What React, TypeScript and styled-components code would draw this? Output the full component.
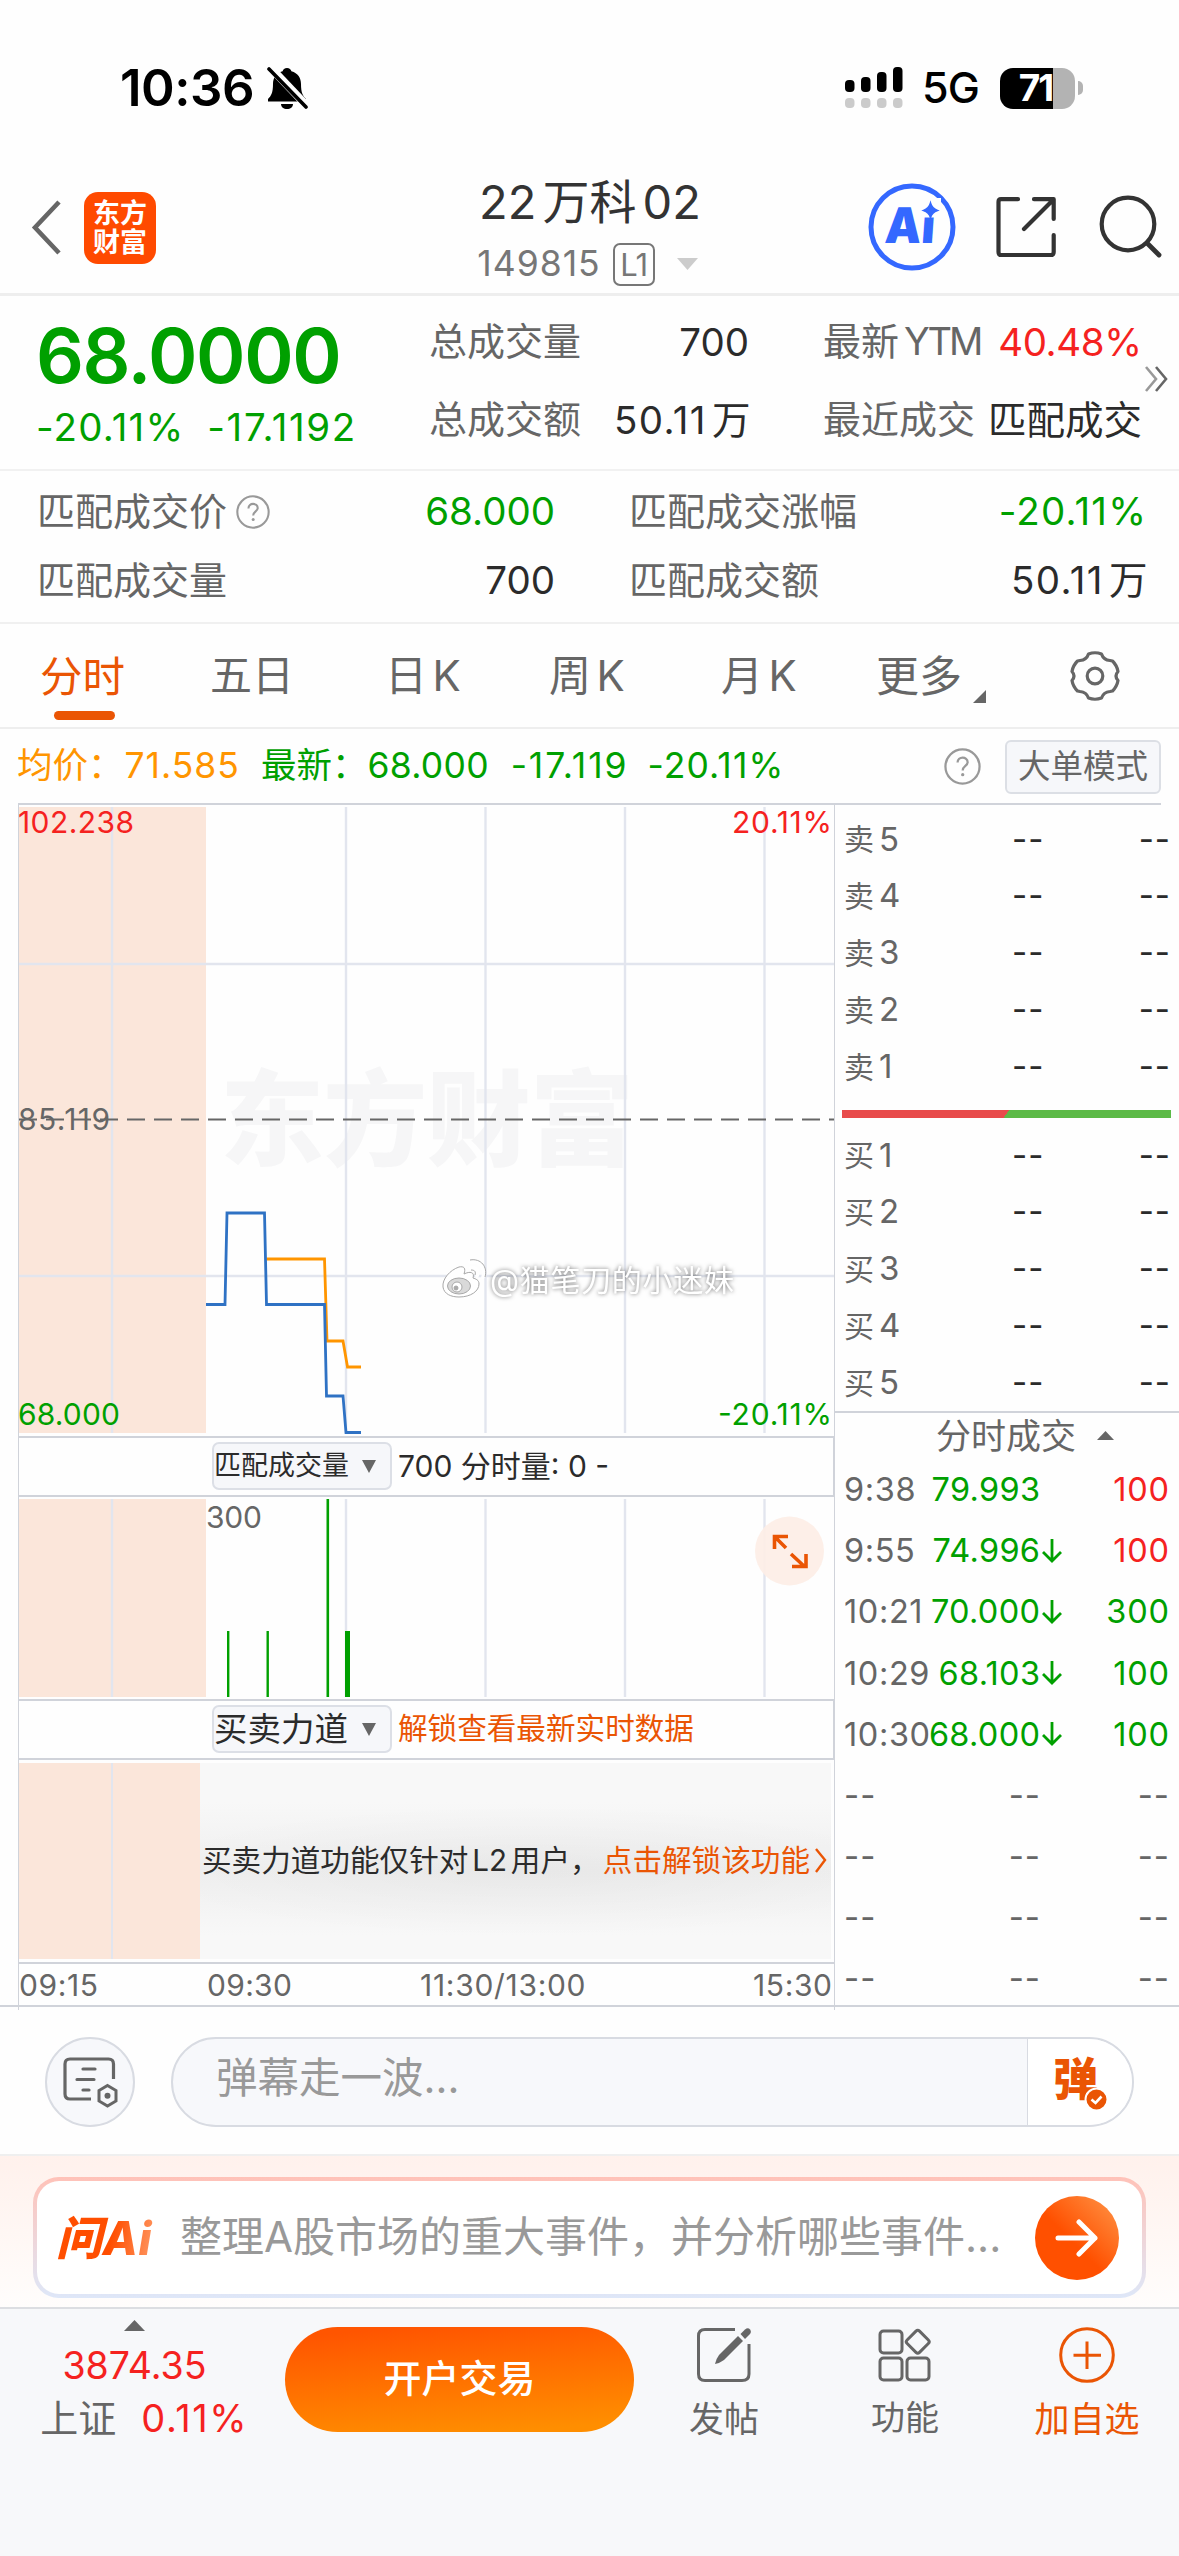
import React from 'react';
import styled, { createGlobalStyle } from 'styled-components';

const GREEN = '#00a000';
const RED = '#f5221f';
const ORANGE = '#ea5504';
const GREY = '#666666';
const INK = '#2b2b2b';
const LINE = '#d0d3da';
const GRID = '#e2e5ee';
const PEACH = '#fbe6da';
const FONT = "Inter, 'Noto Sans CJK SC', sans-serif";

const Global = createGlobalStyle`
  * { box-sizing: border-box; }
  body { margin: 0; background: #fefefe; }
`;

const Screen = styled.div`
  width: 1179px;
  height: 2556px;
  display: flex;
  flex-direction: column;
  background: #fefefe;
  font-family: ${FONT};
  overflow: hidden;
`;

const Txt = styled.span<{ $s: number; $c?: string; $ls?: number; $w?: number }>`
  font-size: ${(p) => p.$s}px;
  line-height: 1.2;
  color: ${(p) => p.$c ?? GREY};
  letter-spacing: ${(p) => p.$ls ?? 0}px;
  margin-right: ${(p) => -(p.$ls ?? 0)}px;
  font-weight: ${(p) => p.$w ?? 400};
  white-space: pre;
  flex: none;
`;

const Han = styled.span<{ $before: boolean; $after: boolean }>`
  margin-left: ${(p) => (p.$before ? 0.13 : 0)}em;
  margin-right: ${(p) => (p.$after ? 0.13 : 0)}em;
  letter-spacing: 0;
`;

/* Adds a narrow gap where Chinese characters meet Latin letters or digits. */
const mix = (text: string) => {
  const runs = text.split(/([\u4e00-\u9fff]+)/).filter(Boolean);
  if (runs.length < 2) return text;
  return runs.map((run, i) =>
    /[\u4e00-\u9fff]/.test(run) ? (
      <Han key={i} $before={i > 0} $after={i < runs.length - 1}>{run}</Han>
    ) : (
      run
    ),
  );
};

const Spacer = styled.div<{ $w?: number }>`
  flex: ${(p) => (p.$w ? `0 0 ${p.$w}px` : '1')};
`;

/* ---------- status bar ---------- */
const StatusBar = styled.div`
  height: 176px;
  flex: none;
  display: flex;
  align-items: center;
  padding: 0 96px 0 120px;
`;

const Battery = styled.div`
  width: 75px;
  height: 41px;
  border-radius: 13px;
  background: linear-gradient(90deg, #000 0 53px, #b3b3b3 53px);
  display: flex;
  align-items: center;
  justify-content: center;
  margin-left: 20px;
  padding-right: 2px;
`;

const BatteryTip = styled.div`
  width: 5px;
  height: 14px;
  margin-left: 3px;
  border-radius: 0 5px 5px 0;
  background: #b3b3b3;
`;

/* ---------- navigation ---------- */
const Nav = styled.header`
  height: 120px;
  flex: none;
  display: grid;
  grid-template-columns: 390px 400px 389px;
  border-bottom: 3px solid #eeeeee;
`;

const NavLeft = styled.div`
  display: flex;
  align-items: center;
  padding: 0 0 16px 30px;
  gap: 22px;
`;

const AppLogo = styled.div`
  width: 72px;
  height: 72px;
  margin-top: 3px;
  border-radius: 14px;
  background: #ff4a00;
  display: grid;
  place-content: center;
  font: 700 27px/29px ${FONT};
  color: #fff;
  text-align: center;
`;

const NavTitle = styled.div`
  display: flex;
  flex-direction: column;
  align-items: center;
`;

const TitleRow = styled.div`
  height: 52px;
  display: flex;
  align-items: center;
`;

const CodeRow = styled.div`
  display: flex;
  align-items: center;
  height: 46px;
  margin: 13px 0 0 -5px;
`;

const LevelBadge = styled.span`
  width: 42px;
  height: 43px;
  margin: 0 22px 0 13px;
  border: 2px solid #777;
  border-radius: 7px;
  display: grid;
  place-items: center;
  font-size: 31px;
  line-height: 1;
  letter-spacing: -1px;
  color: #777;
`;

const NavRight = styled.div`
  display: flex;
  justify-content: flex-end;
  padding: 4px 0 0 0;
`;

/* ---------- quote ---------- */
const Quote = styled.section`
  height: 175px;
  flex: none;
  display: grid;
  grid-template-columns: 393px 319px 75px 1fr;
  padding: 7px 0 0 36px;
  border-bottom: 2px solid #f1f1f1;
`;

const PriceBlock = styled.div`
  display: flex;
  flex-direction: column;
`;

const BigPrice = styled.div`
  height: 106px;
  display: flex;
  align-items: center;
`;

const ChangeRow = styled.div`
  height: 36px;
  display: flex;
  align-items: center;
  gap: 24px;
`;

const FactColumn = styled.div<{ $row: number; $w: number }>`
  width: ${(p) => p.$w}px;
  display: grid;
  grid-auto-rows: ${(p) => p.$row}px;
`;

const FactRow = styled.div`
  display: flex;
  align-items: center;
  justify-content: space-between;
`;

const FactSide = styled.div`
  display: flex;
`;

const MoreMark = styled.svg`
  flex: none;
  margin: 62px 0 0 2px;
`;

const MatchBox = styled.section`
  height: 153px;
  flex: none;
  display: grid;
  grid-template-columns: 517px 516px;
  gap: 75px;
  padding: 6px 0 0 37px;
  border-bottom: 2px solid #f0f0f0;
`;

const LabelWithIcon = styled.div`
  display: flex;
  align-items: center;
  gap: 9px;
`;

/* ---------- tabs ---------- */
const Tabs = styled.nav`
  height: 105px;
  flex: none;
  display: flex;
  border-bottom: 2px solid #eeeeee;
  padding-left: 40px;
`;

const Tab = styled.div<{ $w: number }>`
  width: ${(p) => p.$w}px;
  height: 103px;
  display: flex;
  flex-direction: column;
  align-items: flex-start;
  padding-top: 27px;
`;

const TabMark = styled.div`
  width: 61px;
  height: 9px;
  margin: 9px 0 0 14px;
  border-radius: 5px;
  background: ${ORANGE};
`;

const TabRow = styled.div`
  display: flex;
  align-items: flex-end;
  gap: 11px;
`;

const InfoLine = styled.div`
  height: 74px;
  flex: none;
  display: flex;
  align-items: center;
  padding: 1px 18px 0 17px;
`;

const ModeButton = styled.button`
  width: 156px;
  height: 54px;
  margin-left: 24px;
  padding: 0;
  border: 2px solid #dcdfe5;
  border-radius: 6px;
  background: #f6f7fa;
  display: grid;
  place-items: center;
  font-family: ${FONT};
`;

/* ---------- chart and order book ---------- */
const Market = styled.main`
  height: 1204px;
  flex: none;
  display: grid;
  grid-template-columns: 817px 344px;
  padding-left: 18px;
  border-bottom: 2px solid ${LINE};
`;

const ChartSide = styled.div`
  display: flex;
  flex-direction: column;
  border-top: 2px solid ${LINE};
  border-left: 1px solid ${LINE};
  border-right: 1px solid ${LINE};
`;

const PriceChart = styled.div`
  height: 631px;
  flex: none;
`;

const Layer = styled.svg`
  display: block;
`;

const IndicatorBar = styled.div`
  height: 61px;
  flex: none;
  display: flex;
  align-items: center;
  padding: 0 0 1px 193px;
  border-top: 2px solid ${LINE};
  border-bottom: 2px solid ${LINE};
  border-right: 1px solid ${LINE};
`;

const Picker = styled.div`
  width: 180px;
  height: 48px;
  margin-right: 6px;
  border: 2px solid #dcdfe6;
  border-radius: 7px;
  background: #f6f7fa;
  display: flex;
  align-items: center;
  justify-content: space-between;
  padding-right: 14px;
`;

const VolumeChart = styled.div`
  height: 202px;
  flex: none;
`;

const PowerPane = styled.div`
  height: 204px;
  flex: none;
  display: grid;
  grid-template-columns: 181px 631px;
  padding: 3px 0;
  border-bottom: 2px solid ${LINE};
`;

const PreOpen = styled.div`
  background: linear-gradient(90deg, transparent 92px, ${GRID} 92px 94px, transparent 94px), ${PEACH};
`;

const LockPane = styled.div`
  display: flex;
  align-items: center;
  padding-left: 2px;
  background:
    radial-gradient(ellipse 62% 34% at 52% 55%, rgba(0, 0, 0, 0.03), transparent),
    linear-gradient(180deg, #f8f8f8 20%, #efefef 55%, #f8f8f8 88%);
`;

const TimeAxis = styled.div`
  flex: 1;
  display: grid;
  grid-template-columns: 188px 213px 1fr auto;
  align-items: center;
  padding: 0 2px 3px 0;
`;

const Book = styled.aside`
  display: flex;
  flex-direction: column;
`;

const BookHalf = styled.div<{ $h: number; $top: number }>`
  height: ${(p) => p.$h}px;
  padding-top: ${(p) => p.$top}px;
  display: grid;
  grid-auto-rows: 56.8px;
`;

const BookRow = styled.div`
  display: grid;
  grid-template-columns: 168px 30px 1fr;
  align-items: center;
  padding: 0 9px 0 9px;
  & > :last-child { justify-self: end; }
`;

const BookTop = styled.div`
  border-top: 2px solid ${LINE};
  width: 326px;
`;

const Level = styled.div`
  display: flex;
  align-items: center;
  gap: 5px;
`;

const RatioBar = styled.div`
  height: 8px;
  flex: none;
  margin: 0 8px 0 7px;
  background: linear-gradient(126deg, #e84b4b 49.9%, #5cba47 50%);
`;

const TradesHead = styled.div`
  height: 49px;
  flex: none;
  border-top: 2px solid ${LINE};
  display: flex;
  align-items: center;
  padding: 0 0 2px 101px;
  gap: 21px;
`;

const Trades = styled.div`
  display: grid;
  grid-auto-rows: 61.2px;
  margin-top: -1px;
`;

const TradeRow = styled.div`
  display: grid;
  grid-template-columns: 50px 146px 24px 1fr;
  align-items: center;
  padding: 0 10px 0 9px;
  & > :nth-child(2) { justify-self: end; }
  & > :last-child { justify-self: end; }
`;

/* ---------- comment bar ---------- */
const CommentBar = styled.section`
  height: 149px;
  flex: none;
  display: flex;
  align-items: flex-start;
  padding: 30px 0 0 45px;
  gap: 36px;
  border-bottom: 2px solid #efefef;
`;

const RoundButton = styled.div`
  width: 90px;
  height: 90px;
  border: 2px solid #d8dbe2;
  border-radius: 50%;
  background: #f7f8fb;
  display: grid;
  place-items: center;
`;

const CommentInput = styled.div`
  width: 963px;
  height: 90px;
  border: 2px solid #d8dbe2;
  border-radius: 45px;
  background: #f7f8fb;
  display: flex;
  overflow: hidden;
`;

const Placeholder = styled.div`
  width: 855px;
  padding: 15px 0 0 43px;
  display: flex;
  align-items: flex-start;
  border-right: 1px solid #d8dbe2;
`;

const BulletToggle = styled.div`
  position: relative;
  flex: 1;
  background: #fff;
  padding: 14px 0 0 25px;
`;

const BulletCheck = styled.svg`
  position: absolute;
  left: 56px;
  top: 48px;
`;

/* ---------- AI prompt ---------- */
const AiPanel = styled.section`
  height: 151px;
  flex: none;
  padding: 21px 33px 0;
  background: linear-gradient(180deg, #fff1ec, #fffdfc);
`;

const AiBox = styled.div`
  height: 121px;
  border: 4px solid transparent;
  border-radius: 26px;
  background:
    linear-gradient(#fff, #fff) padding-box,
    linear-gradient(180deg, #ffc2b8, #dee7f8) border-box;
  display: flex;
  align-items: center;
  padding: 0 23px 0 19px;
`;

const AiWord = styled.span`
  width: 124px;
  font: italic 800 46px/56px ${FONT};
  letter-spacing: 0.5px;
  color: transparent;
  background: linear-gradient(100deg, #ff4e00 45%, #ff9a66 80%);
  background-clip: text;
  -webkit-background-clip: text;
`;

const GoButton = styled.div`
  width: 84px;
  height: 84px;
  border-radius: 50%;
  background: linear-gradient(45deg, #ff5000 45%, #ff8a3c 90%);
  display: grid;
  place-items: center;
`;

/* ---------- footer ---------- */
const Footer = styled.footer`
  flex: 1;
  display: flex;
  align-items: flex-start;
  padding-top: 10px;
  border-top: 2px solid #dcdee2;
  background: #f7f8fa;
`;

const IndexBox = styled.div`
  width: 285px;
  display: flex;
  flex-direction: column;
  align-items: center;
  padding: 1px 16px 0 0;
`;

const IndexLine = styled.div<{ $h: number; $shift?: number }>`
  height: ${(p) => p.$h}px;
  padding-left: ${(p) => p.$shift ?? 0}px;
  display: flex;
  align-items: center;
  gap: 25px;
`;

const OpenButton = styled.div`
  width: 349px;
  height: 105px;
  margin-top: 8px;
  padding-bottom: 2px;
  border-radius: 53px;
  background: linear-gradient(175deg, #ff5500 8%, #ff8e00 92%);
  display: grid;
  place-items: center;
`;

const Action = styled.div<{ $w: number; $ml: number }>`
  width: ${(p) => p.$w}px;
  margin-left: ${(p) => p.$ml}px;
  display: flex;
  flex-direction: column;
  align-items: center;
  padding-top: 8px;
  gap: 15px;
`;

/* ---------- icons ---------- */
const Triangle = ({ w, h, color, down }: { w: number; h: number; color: string; down?: boolean }) => (
  <svg width={w} height={h} viewBox="0 0 10 10" preserveAspectRatio="none">
    <path d={down ? 'M0 0H10L5 10Z' : 'M0 10H10L5 0Z'} fill={color} />
  </svg>
);

const Help = ({ size }: { size: number }) => (
  <svg width={size} height={size} viewBox="0 0 36 36">
    <circle cx="18" cy="18" r="16.6" fill="none" stroke="#999" strokeWidth="2.2" />
    <path d="M13.2 14.2c0-6.4 9.8-6.2 9.8-.4 0 3.6-4.8 3.6-4.8 8" fill="none" stroke="#999" strokeWidth="2.2" />
    <circle cx="18.2" cy="26" r="1.6" fill="#999" />
  </svg>
);

const BellOff = () => (
  <svg width="42" height="44" viewBox="0 0 42 44">
    <path d="M21 2c2.400 0 4 1.500 4.400 3.200C32 7 35 12 35 18c0 9 2 12 5 15v2.500H2V33c3-3 5-6 5-15C7 12 10 7 16.600 5.200 17 3.500 18.600 2 21 2Z" fill="#000" />
    <path d="M15 38h12c0 3-2.600 5-6 5s-6-2-6-5Z" fill="#000" />
    <path d="M3 0L43 42" stroke="#fefefe" strokeWidth="8" />
    <path d="M3 3L40 41" stroke="#000" strokeWidth="3.600" strokeLinecap="round" />
  </svg>
);

const Signal = () => (
  <svg width="58" height="42" viewBox="0 0 58 42">
    {[0, 1, 2, 3].map((i) => (
      <g key={i}>
        <rect x={i * 16} y={[13, 10, 5, 0][i]} width="9.500" height={[12, 15, 20, 25][i]} rx="4" fill="#000" />
        <rect x={i * 16} y="31" width="9.500" height="10" rx="4" fill="#cbcbcb" />
      </g>
    ))}
  </svg>
);

const NavIcons = () => (
  <svg width="329" height="110" viewBox="0 0 329 110">
    <circle cx="62" cy="47" r="41" fill="none" stroke="#3468ff" strokeWidth="5" />
    <text x="37" y="63" fontFamily="Inter" fontWeight="900" fontSize="49" fill="#3468ff" transform="skewX(-4) translate(1.500 0)" textLength="50" lengthAdjust="spacingAndGlyphs">Ai</text>
    <path d="M71 18H91V37.500H71Z" fill="#fefefe" />
    <path d="M80.500 23Q82 28.500 87.500 30.500Q82 32.500 80.500 37.500Q79 32.500 73.500 30.500Q79 28.500 80.500 23Z" fill="#3468ff" stroke="#3468ff" strokeWidth="1.500" />
    <g fill="none" stroke="#333" strokeWidth="4.200" strokeLinecap="round" strokeLinejoin="round">
      <path d="M168 19.200H151Q148.500 19.200 148.500 22V72Q148.500 75 151 75H201Q203.700 75 203.700 72V55M184 19.200H203.700V39M203 20L174 49" />
      <circle cx="278" cy="44" r="26.300" />
      <path d="M298 64L309 75" strokeWidth="4.800" />
    </g>
  </svg>
);

const Gear = () => (
  <svg width="52" height="50" viewBox="0 0 52 50">
    <path
      d="M19.500 3Q26 0.500 32.500 3Q34.500 9 41 9.500L43.500 10Q48 14.500 49 20.500Q45 25 49 29.500Q48 35.500 43.500 40L41 40.500Q34.500 41 32.500 47Q26 49.500 19.500 47Q17.500 41 11 40.500L8.500 40Q4 35.500 3 29.500Q7 25 3 20.500Q4 14.500 8.500 10L11 9.500Q17.500 9 19.500 3Z"
      fill="none" stroke="#666" strokeWidth="3.200" strokeLinejoin="round"
    />
    <circle cx="26" cy="25" r="7.800" fill="none" stroke="#666" strokeWidth="3.200" />
  </svg>
);

const NoteIcon = () => (
  <svg width="56" height="52" viewBox="0 0 56 52" fill="none" stroke="#666" strokeWidth="3.200" strokeLinecap="round">
    <path d="M51.500 23V8Q51.500 3 46.500 3H8Q3 3 3 8V38Q3 43 8 43H29" strokeLinecap="butt" />
    <path d="M21 13H33M15 23.500H32M21 34H27" />
    <path d="M45.500 29.500L54 34.500V45L45.500 50L37 45V34.500Z" strokeWidth="3" />
    <circle cx="45.500" cy="39.800" r="3" fill="#666" stroke="none" />
  </svg>
);

const PostIcon = () => (
  <svg width="56" height="56" viewBox="0 0 56 56">
    <path d="M39 2.400H9Q2.500 2.400 2.500 9V47Q2.500 53.500 9 53.500H46Q53 53.500 53 47V17" fill="none" stroke="#666" strokeWidth="3" />
    <path d="M42 9L47 14L28 33Q24 36 19 37Q20 32 23 28Z" fill="#666" />
    <path d="M44.500 7L49 2.500Q52 0 54 2.500Q56 5 53.500 7.500L49 12Z" fill="#666" />
  </svg>
);

const FeatureIcon = () => (
  <svg width="54" height="56" viewBox="0 0 54 56" fill="none" stroke="#666" strokeWidth="3">
    <rect x="2" y="4" width="22" height="22" rx="3.500" />
    <rect x="2" y="31" width="22" height="22" rx="3.500" />
    <rect x="29" y="31" width="22" height="22" rx="3.500" />
    <rect x="31" y="6" width="17.500" height="17.500" rx="2.500" transform="rotate(45 39.750 14.750)" />
  </svg>
);

const AddIcon = () => (
  <svg width="56" height="56" viewBox="0 0 56 56" fill="none" stroke={ORANGE} strokeWidth="3">
    <circle cx="28" cy="28" r="26.300" />
    <path d="M28 14.500V42M14.500 28.300H42" />
  </svg>
);

const Weibo = () => (
  <g transform="translate(424 456)" stroke="#a8a8a8" strokeWidth="1">
    <path d="M16 6C7 9-1 18 0 26c1 7 8 10 16 10 12 0 20-6 20-13 0-4-3-5-6-6 2-6-3-7-9-4 2-6 0-8-5-7Z" fill="#fff" />
    <ellipse cx="16" cy="25" rx="11.500" ry="8" fill="#d9d9d9" />
    <circle cx="14" cy="26" r="5" fill="#fff" />
    <circle cx="13" cy="27" r="2" fill="#aaa" />
    <path d="M28 7c5-1 8 3 6 8M27 1c9-2 16 6 13 15" fill="none" stroke="#fff" strokeWidth="3.600" strokeLinecap="round" />
    <path d="M27-1c11-2 18 7 15 17M28 9c4 0 5 2 4 5" fill="none" />
  </g>
);

/* ---------- data ---------- */
const GRID_X = [93, 327, 466.5, 606, 745.5];

const tabs = [
  { label: '五日', w: 175, ls: 0 },
  { label: '日K', w: 164, ls: 0 },
  { label: '周K', w: 172, ls: 0 },
  { label: '月K', w: 155, ls: 0 },
];

const trades: [string, string, boolean, string, string][] = [
  ['9:38', '79.993', false, '100', RED],
  ['9:55', '74.996', true, '100', RED],
  ['10:21', '70.000', true, '300', GREEN],
  ['10:29', '68.103', true, '100', GREEN],
  ['10:30', '68.000', true, '100', GREEN],
];

const Fact = ({ label, value, color = INK, ls = 0, lls = 0 }: { label: string; value: string; color?: string; ls?: number; lls?: number }) => (
  <FactRow>
    <Txt $s={38} $ls={lls}>{mix(label)}</Txt>
    <Txt $s={38.5} $c={color} $ls={ls}>{mix(value)}</Txt>
  </FactRow>
);

const Dashes = ({ color = GREY }: { color?: string }) => <Txt $s={33} $c={color} $ls={1}>--</Txt>;

const Depth = ({ side, n }: { side: string; n: number }) => (
  <BookRow>
    <Level>
      <Txt $s={30}>{side}</Txt>
      <Txt $s={33}>{n}</Txt>
    </Level>
    <Dashes color={INK} />
    <Dashes color={INK} />
  </BookRow>
);

const label = (x: number, y: number, t: string, fill: string, w: number, end = false) => (
  <text x={end ? x - w : x} y={y} fill={fill} fontSize="30" fontFamily={FONT} textLength={w}>{t}</text>
);

export default function App() {
  return (
    <Screen>
      <Global />
      <StatusBar>
        <Txt $s={51} $c="#000" $w={600} $ls={-0.5}>10:36</Txt>
        <Spacer $w={11} />
        <BellOff />
        <Spacer />
        <Signal />
        <Spacer $w={19} />
        <Txt $s={43} $c="#000" $w={500} $ls={-0.8}>5G</Txt>
        <Battery><Txt $s={37} $c="#fff" $w={700} $ls={-2}>71</Txt></Battery>
        <BatteryTip />
      </StatusBar>

      <Nav>
        <NavLeft>
          <svg width="32" height="56" viewBox="0 0 32 56">
            <path d="M29 3L5 28.500L29 54" fill="none" stroke="#666" strokeWidth="4.600" />
          </svg>
          <AppLogo>东方<br />财富</AppLogo>
        </NavLeft>
        <NavTitle>
          <TitleRow><Txt $s={47} $c="#333">{mix('22万科02')}</Txt></TitleRow>
          <CodeRow>
            <Txt $s={35.5} $c="#777" $ls={1}>149815</Txt>
            <LevelBadge>L1</LevelBadge>
            <Triangle w={21} h={12} color="#ccc" down />
          </CodeRow>
        </NavTitle>
        <NavRight><NavIcons /></NavRight>
      </Nav>

      <Quote>
        <PriceBlock>
          <BigPrice><Txt $s={75} $c={GREEN} $w={600} $ls={-1.4}>68.0000</Txt></BigPrice>
          <ChangeRow>
            <Txt $s={38.5} $c={GREEN} $ls={1.2}>-20.11%</Txt>
            <Txt $s={38.5} $c={GREEN} $ls={1.6}>-17.1192</Txt>
          </ChangeRow>
        </PriceBlock>
        <FactColumn $row={78} $w={320}>
          <Fact label="总成交量" value="700" />
          <Fact label="总成交额" value="50.11万" ls={1.4} />
        </FactColumn>
        <div />
        <FactSide>
          <FactColumn $row={78} $w={319}>
            <Fact label="最新YTM" value="40.48%" color={RED} ls={-0.4} lls={-3} />
            <Fact label="最近成交" value="匹配成交" />
          </FactColumn>
          <MoreMark width="28" height="28" viewBox="0 0 28 28">
            <path d="M2 2L12 14L2 26" fill="none" stroke="#999" strokeWidth="2.600" />
            <path d="M12 2L22 14L12 26" fill="none" stroke="#666" strokeWidth="2.600" />
          </MoreMark>
        </FactSide>
      </Quote>

      <MatchBox>
        <FactColumn $row={69} $w={518}>
          <FactRow>
            <LabelWithIcon><Txt $s={38}>匹配成交价</Txt><Help size={34} /></LabelWithIcon>
            <Txt $s={38.5} $c={GREEN}>68.000</Txt>
          </FactRow>
          <Fact label="匹配成交量" value="700" />
        </FactColumn>
        <FactColumn $row={69} $w={517}>
          <Fact label="匹配成交涨幅" value="-20.11%" color={GREEN} ls={1.2} />
          <Fact label="匹配成交额" value="50.11万" ls={1.4} />
        </FactColumn>
      </MatchBox>

      <Tabs>
        <Tab $w={170}>
          <Txt $s={42.5} $c={ORANGE}>分时</Txt>
          <TabMark />
        </Tab>
        {tabs.map((t) => (
          <Tab key={t.label} $w={t.w}><Txt $s={42} $ls={t.ls}>{mix(t.label)}</Txt></Tab>
        ))}
        <Tab $w={193}>
          <TabRow>
            <Txt $s={43}>更多</Txt>
            <svg width="13" height="13" viewBox="0 0 13 13"><path d="M13 0V13H0Z" fill="#666" /></svg>
          </TabRow>
        </Tab>
        <Tab $w={60}><Gear /></Tab>
      </Tabs>

      <InfoLine>
        <Txt $s={35.5} $c="#ff9500">均价：</Txt>
        <Spacer $w={1} />
        <Txt $s={35.5} $c="#ff9500" $ls={1}>71.585</Txt>
        <Spacer $w={22} />
        <Txt $s={35.5} $c={GREEN}>最新：</Txt>
        <Txt $s={35.5} $c={GREEN} $ls={0.3}>68.000</Txt>
        <Spacer $w={22} />
        <Txt $s={35.5} $c={GREEN} $ls={1.9}>-17.119</Txt>
        <Spacer $w={21} />
        <Txt $s={35.5} $c={GREEN} $ls={1.1}>-20.11%</Txt>
        <Spacer />
        <Help size={37} />
        <ModeButton><Txt $s={32.5}>大单模式</Txt></ModeButton>
      </InfoLine>

      <Market>
        <ChartSide>
          <PriceChart>
            <Layer width="815" height="631" viewBox="0 0 815 631">
              <rect x="0" y="2" width="187" height="626" fill={PEACH} />
              <text x="201" y="353" fontFamily={FONT} fontWeight="900" fontSize="104" fill="#f6f6f7" textLength="414">东方财富</text>
              <g stroke={GRID} strokeWidth="2.400">
                {GRID_X.map((x) => <path key={x} d={`M${x} 2V628`} />)}
                <path d="M0 159H815M0 471H815" />
              </g>
              {label(-1, 28, '102.238', RED, 116)}
              {label(813, 28, '20.11%', RED, 100, true)}
              {label(-1, 325, '85.119', GREY, 92)}
              {label(-1, 620, '68.000', GREEN, 102)}
              {label(813, 620, '-20.11%', GREEN, 114, true)}
              <path d="M0 314.500H815" stroke="#666" strokeWidth="2" strokeDasharray="18 9" />
              <path d="M247.500 454H305.500L308 536H324L328.500 562H342" fill="none" stroke="#ff9500" strokeWidth="2.800" />
              <path d="M187 499.500H206L208 408H245.500L247.500 499.500H305.500L307.500 591H324L327 627.500H342" fill="none" stroke="#2f72c4" strokeWidth="2.800" />
              <Weibo />
              <text x="471" y="486" fontFamily={FONT} fontSize="30" fill="#fff" textLength="244" style={{ filter: 'drop-shadow(0 0 2px rgba(0,0,0,.55))' }}>@猫笔刀的小迷妹</text>
            </Layer>
          </PriceChart>
          <IndicatorBar>
            <Picker>
              <Txt $s={27} $c={INK}>匹配成交量</Txt>
              <Triangle w={14} h={13} color="#666" down />
            </Picker>
            <Txt $s={30} $c={INK}>700 分时量: 0 -</Txt>
          </IndicatorBar>
          <VolumeChart>
            <Layer width="815" height="202" viewBox="0 0 815 202">
              <rect x="0" y="2" width="187" height="198" fill={PEACH} />
              <g stroke={GRID} strokeWidth="2.400">
                {GRID_X.map((x) => <path key={x} d={`M${x} 2V200`} />)}
              </g>
              {label(187, 31, '300', GREY, 56)}
              <g fill={GREEN}>
                <rect x="208" y="134" width="2.400" height="66" />
                <rect x="247.500" y="134" width="2.400" height="66" />
                <rect x="307.500" y="2" width="2.600" height="198" />
                <rect x="326" y="134" width="5" height="66" />
              </g>
              <circle cx="770.500" cy="54" r="34.500" fill="#fdeee6" fillOpacity=".92" />
              <g fill="none" stroke={ORANGE} strokeWidth="3.600">
                <path d="M755.500 52V39.500H769M756 40L767 51M772 57L786 70M787 57V69.500H773" />
              </g>
            </Layer>
          </VolumeChart>
          <IndicatorBar>
            <Picker>
              <Txt $s={33.5} $c={INK}>买卖力道</Txt>
              <Triangle w={14} h={13} color="#666" down />
            </Picker>
            <Txt $s={29.6} $c={ORANGE}>解锁查看最新实时数据</Txt>
          </IndicatorBar>
          <PowerPane>
            <PreOpen />
            <LockPane>
              <Txt $s={29.6} $c={INK}>{mix('买卖力道功能仅针对L2用户')}，</Txt>
              <Spacer />
              <Txt $s={29.6} $c={ORANGE}>点击解锁该功能</Txt>
              <svg width="21" height="28" viewBox="0 0 21 28">
                <path d="M6 2L15 13L6 25" fill="none" stroke={ORANGE} strokeWidth="2.400" />
              </svg>
            </LockPane>
          </PowerPane>
          <TimeAxis>
            <Txt $s={30} $ls={0.6}>09:15</Txt>
            <Txt $s={30} $ls={0.3}>09:30</Txt>
            <Txt $s={30} $ls={0.7}>11:30/13:00</Txt>
            <Txt $s={30} $ls={0.6}>15:30</Txt>
          </TimeAxis>
        </ChartSide>

        <Book>
          <BookTop />
          <BookHalf $h={305} $top={6}>
            {[5, 4, 3, 2, 1].map((n) => <Depth key={n} side="卖" n={n} />)}
          </BookHalf>
          <RatioBar />
          <BookHalf $h={293} $top={9}>
            {[1, 2, 3, 4, 5].map((n) => <Depth key={n} side="买" n={n} />)}
          </BookHalf>
          <TradesHead>
            <Txt $s={35}>分时成交</Txt>
            <Triangle w={17} h={9} color="#666" />
          </TradesHead>
          <Trades>
            {trades.map(([time, price, down, vol, color]) => (
              <TradeRow key={time}>
                <Txt $s={32.5} $ls={0.6}>{time}</Txt>
                <Txt $s={32.5} $c={GREEN} $ls={0.3}>{price}</Txt>
                {down ? (
                  <svg width="24" height="26" viewBox="0 0 24 26">
                    <path d="M12 1V23M3 14L12 23L21 14" fill="none" stroke={GREEN} strokeWidth="2.800" />
                  </svg>
                ) : <span />}
                <Txt $s={32.5} $c={color} $ls={0.8}>{vol}</Txt>
              </TradeRow>
            ))}
            {[0, 1, 2, 3].map((i) => (
              <TradeRow key={i}><Dashes /><Dashes /><span /><Dashes /></TradeRow>
            ))}
          </Trades>
        </Book>
      </Market>

      <CommentBar>
        <RoundButton><NoteIcon /></RoundButton>
        <CommentInput>
          <Placeholder><Txt $s={41.500} $c="#999">弹幕走一波...</Txt></Placeholder>
          <BulletToggle>
            <Txt $s={45} $c={ORANGE} $w={900}>弹</Txt>
            <BulletCheck width="25" height="25" viewBox="0 0 25 25">
              <circle cx="12.500" cy="12.500" r="11" fill={ORANGE} stroke="#fff" strokeWidth="2" />
              <path d="M7.500 12.500L11.500 16L17.500 9.500" fill="none" stroke="#fff" strokeWidth="2.600" />
            </BulletCheck>
          </BulletToggle>
        </CommentInput>
      </CommentBar>

      <AiPanel>
        <AiBox>
          <AiWord>问Ai</AiWord>
          <Txt $s={42} $c="#999">整理A股市场的重大事件，并分析哪些事件...</Txt>
          <Spacer />
          <GoButton>
            <svg width="44" height="38" viewBox="0 0 44 38">
              <path d="M3 19H40M24 3L40 19L24 35" fill="none" stroke="#fff" strokeWidth="5" strokeLinecap="round" strokeLinejoin="round" />
            </svg>
          </GoButton>
        </AiBox>
      </AiPanel>

      <Footer>
        <IndexBox>
          <Triangle w={21} h={11} color="#666" />
          <IndexLine $h={69}><Txt $s={37.500} $c={RED}>3874.35</Txt></IndexLine>
          <IndexLine $h={38} $shift={18}>
            <Txt $s={38}>上证</Txt>
            <Txt $s={38} $c={RED} $ls={1.6}>0.11%</Txt>
          </IndexLine>
        </IndexBox>
        <OpenButton><Txt $s={38} $c="#fff" $w={500}>开户交易</Txt></OpenButton>
        <Action $w={120} $ml={30}><PostIcon /><Txt $s={35}>发帖</Txt></Action>
        <Action $w={120} $ml={61}><FeatureIcon /><Txt $s={34}>功能</Txt></Action>
        <Action $w={120} $ml={62}><AddIcon /><Txt $s={35} $c={ORANGE}>加自选</Txt></Action>
      </Footer>
    </Screen>
  );
}
